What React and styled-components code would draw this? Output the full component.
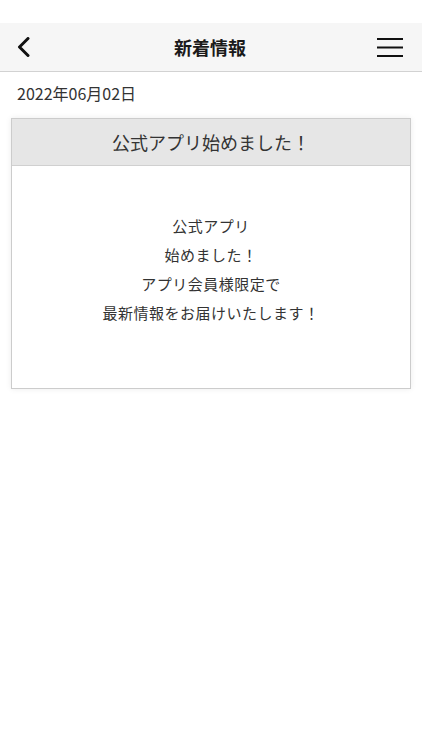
import React from 'react';
import styled, { createGlobalStyle } from 'styled-components';

const GlobalStyle = createGlobalStyle`
    body {
        margin: 0;
        background: #ffffff;
        font-family: "Noto Sans CJK JP", "Liberation Sans", sans-serif;
        color: #333333;
    }
`

const Page = styled.div`
    width: 422px;
    min-height: 750px;
    padding-top: 23px;
    box-sizing: border-box;
    background: #ffffff;
`

// ヘッダー
const Header = styled.header`
    height: 48px;
    display: flex;
    align-items: center;
    justify-content: space-between;
    padding: 0 19px 0 17px;
    background: #f6f6f6;
    border-bottom: 1px solid #d2d2d2;
`

const IconButton = styled.div`
    width: 26px;
    height: 26px;
    display: flex;
    align-items: center;
    justify-content: ${props => props.$align || 'center'};
`

const Title = styled.h1`
    margin: 0;
    font-size: 18px;
    font-weight: 700;
    color: #1a1a1a;
`

const Content = styled.main`
    padding: 10px 11px;
`

const DateText = styled.div`
    font-size: 16px;
    color: #333333;
    padding-left: 6px;
    line-height: 22px;
`

// カード
const Card = styled.section`
    margin-top: 14px;
    border: 1px solid #cccccc;
    box-shadow: 0 0 6px rgba(0, 0, 0, 0.08);
    background: #ffffff;
`

const CardHeader = styled.div`
    height: 46px;
    display: flex;
    align-items: center;
    justify-content: center;
    background: #e6e6e6;
    border-bottom: 1px solid #d0d0d0;
    font-size: 18px;
    color: #333333;
`

const CardBody = styled.div`
    padding: 45px 0 61px;
    text-align: center;
    font-size: 15px;
    line-height: 29px;
    color: #333333;
    letter-spacing: 0.5px;
`

export default function App() {
    return (
        <Page>
            <GlobalStyle />
            <Header>
                <IconButton $align="flex-start">
                    <svg width="13" height="20" viewBox="0 0 13 20">
                        <path d="M11 1.5 L2.5 10 L11 18.5" fill="none" stroke="#111" strokeWidth="3" strokeLinecap="round" strokeLinejoin="round" />
                    </svg>
                </IconButton>
                <Title>新着情報</Title>
                <IconButton $align="flex-end">
                    <svg width="26" height="20" viewBox="0 0 26 20">
                        <rect x="0" y="1" width="26" height="2" fill="#111" />
                        <rect x="0" y="9.5" width="26" height="2" fill="#111" />
                        <rect x="0" y="18" width="26" height="2" fill="#111" />
                    </svg>
                </IconButton>
            </Header>
            <Content>
                <DateText>2022年06月02日</DateText>
                <Card>
                    <CardHeader>公式アプリ始めました！</CardHeader>
                    <CardBody>
                        公式アプリ<br />
                        始めました！<br />
                        アプリ会員様限定で<br />
                        最新情報をお届けいたします！
                    </CardBody>
                </Card>
            </Content>
        </Page>
    )
}
